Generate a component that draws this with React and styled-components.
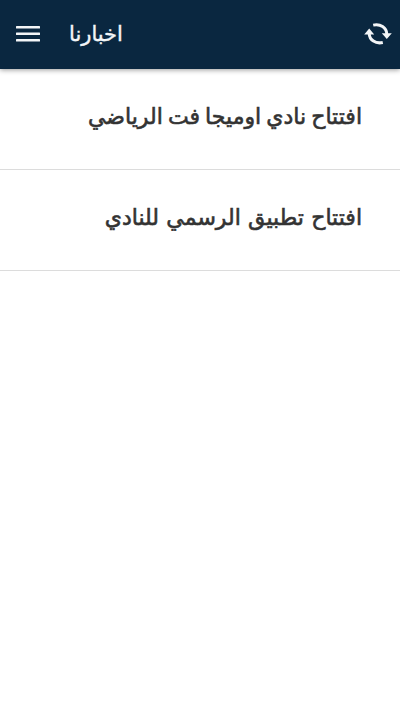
import styled, { createGlobalStyle } from "styled-components";

const GlobalStyle = createGlobalStyle`
  * {
    box-sizing: border-box;
  }

  body {
    margin: 0;
    background: #fff;
    font-family: "DejaVu Sans", sans-serif;
  }
`;

const Page = styled.div`
  min-height: 706px;
  background: #fff;
`;

const Header = styled.header`
  height: 69px;
  padding: 0 8px 2px 16px;
  display: flex;
  align-items: center;
  background: #0a2740;
  color: #f3f5f7;
  box-shadow: 0 1px 5px rgba(0, 0, 0, 0.4);
`;

const IconButton = styled.button`
  display: flex;
  padding: 0;
  border: 0;
  background: none;
  color: inherit;
`;

const Title = styled.h1`
  flex: 1;
  margin: 0 0 0 29px;
  font-size: 21px;
  line-height: 30px;
  font-weight: 400;
  white-space: nowrap;
  -webkit-text-stroke: 0.4px #f3f5f7;
`;

const List = styled.ul`
  margin: 0;
  padding: 0;
  list-style: none;
`;

const Item = styled.li`
  height: 101px;
  padding: 33px 38px 0 0;
  border-bottom: 1px solid #dcdcdc;
  color: #333;
  font-size: 22px;
  line-height: 30px;
  word-spacing: ${(props) => props.$wordSpacing}px;
  white-space: nowrap;
  -webkit-text-stroke: 0.6px #333;
`;

const news = [
  { id: 1, text: "افتتاح نادي اوميجا فت الرياضي", wordSpacing: -1.9 },
  { id: 2, text: "افتتاح تطبيق الرسمي للنادي", wordSpacing: 0.3 },
];

const MenuIcon = () => (
  <svg width="24" height="16" viewBox="0 0 24 16" fill="currentColor">
    <rect y="0" width="24" height="2.6" rx="0.5" />
    <rect y="6.5" width="24" height="2.6" rx="0.5" />
    <rect y="13" width="24" height="2.6" rx="0.5" />
  </svg>
);

const RefreshIcon = () => (
  <svg width="28" height="22" viewBox="0 0 28 22" fill="none">
    <path
      d="M9.2 2.1C16.4.5 22.5 4.5 22.8 11M18.8 19.5C11.6 21.1 5.5 17.1 5.2 10.6"
      stroke="currentColor"
      strokeWidth="3"
    />
    <path
      d="M17.8 10.2h10L22.8 16zM.2 11.4h10L5.2 5.6z"
      fill="currentColor"
    />
  </svg>
);

const App = () => {
  return (
    <Page>
      <GlobalStyle />
      <Header>
        <IconButton>
          <MenuIcon />
        </IconButton>
        <Title>اخبارنا</Title>
        <IconButton>
          <RefreshIcon />
        </IconButton>
      </Header>
      <List dir="rtl">
        {news.map((item) => (
          <Item key={item.id} $wordSpacing={item.wordSpacing}>
            {item.text}
          </Item>
        ))}
      </List>
    </Page>
  );
};

export default App;
